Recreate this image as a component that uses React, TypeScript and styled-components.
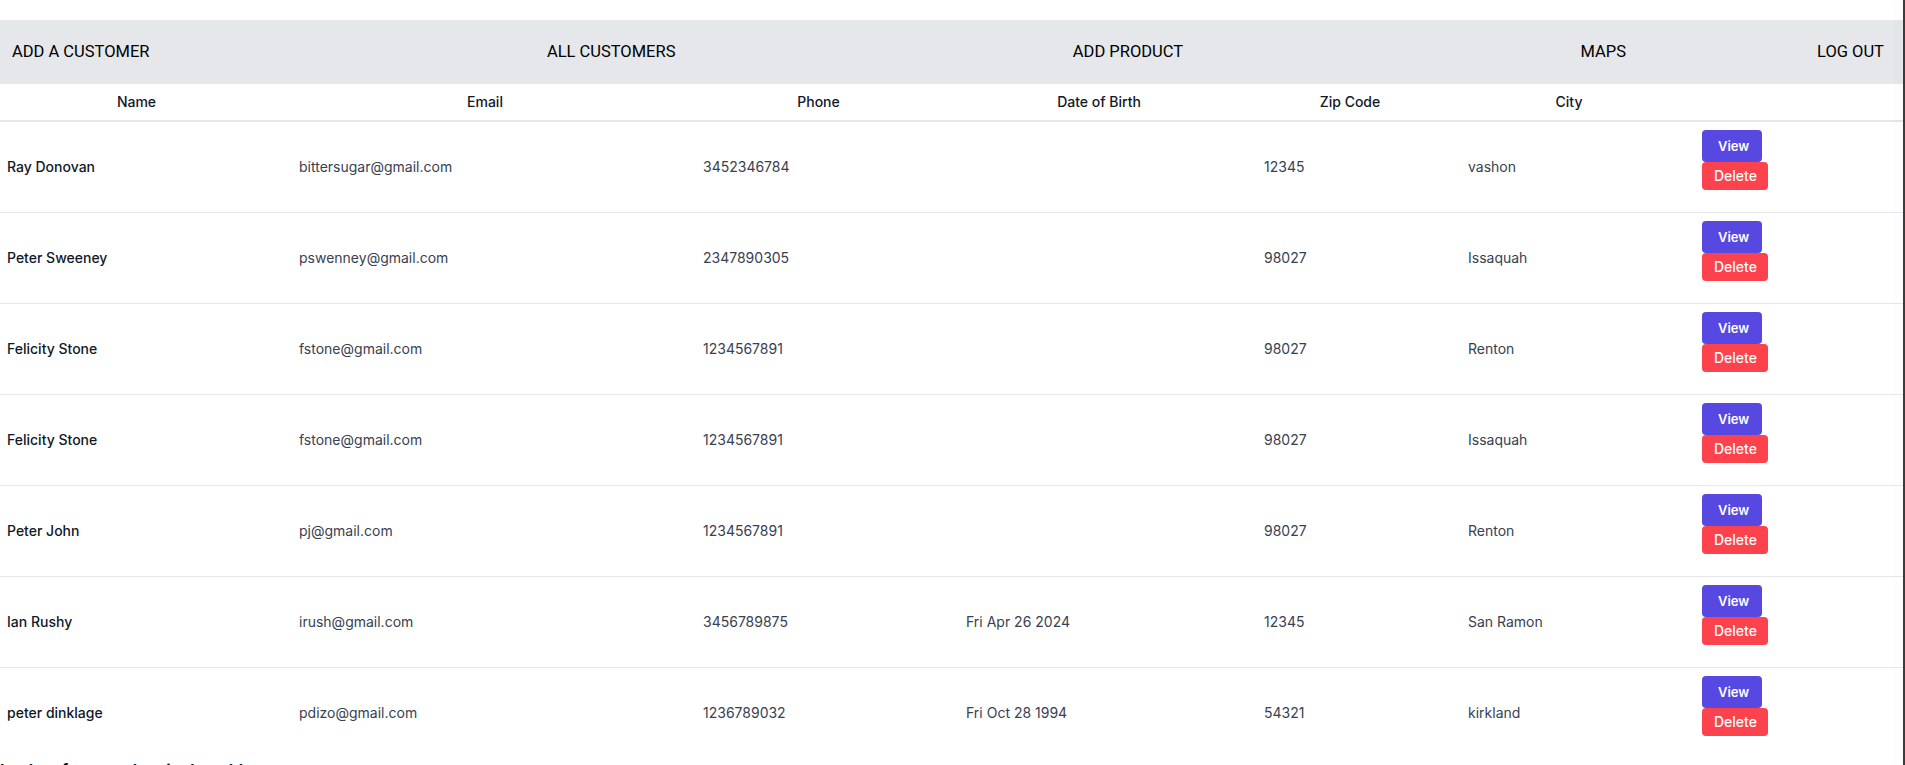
import React from 'react'
import styled, { createGlobalStyle } from 'styled-components'

interface Customer {
  name: string
  email: string
  phone: string
  dob: string
  zip: string
  city: string
}

const customers: Customer[] = [
  { name: 'Ray Donovan', email: 'bittersugar@gmail.com', phone: '3452346784', dob: '', zip: '12345', city: 'vashon' },
  { name: 'Peter Sweeney', email: 'pswenney@gmail.com', phone: '2347890305', dob: '', zip: '98027', city: 'Issaquah' },
  { name: 'Felicity Stone', email: 'fstone@gmail.com', phone: '1234567891', dob: '', zip: '98027', city: 'Renton' },
  { name: 'Felicity Stone', email: 'fstone@gmail.com', phone: '1234567891', dob: '', zip: '98027', city: 'Issaquah' },
  { name: 'Peter John', email: 'pj@gmail.com', phone: '1234567891', dob: '', zip: '98027', city: 'Renton' },
  { name: 'Ian Rushy', email: 'irush@gmail.com', phone: '3456789875', dob: 'Fri Apr 26 2024', zip: '12345', city: 'San Ramon' },
  { name: 'peter dinklage', email: 'pdizo@gmail.com', phone: '1236789032', dob: 'Fri Oct 28 1994', zip: '54321', city: 'kirkland' }
]

const columns = [
  { label: 'Name', width: 283 },
  { label: 'Email', width: 404 },
  { label: 'Phone', width: 263 },
  { label: 'Date of Birth', width: 298 },
  { label: 'Zip Code', width: 204 },
  { label: 'City', width: 234 },
  { label: '', width: 217 }
]

const App: React.FC = () => {
  return (
    <Frame>
      <GlobalStyle />
      <Page>
        <NavBar>
          <NavLink>ADD A CUSTOMER</NavLink>
          <NavLink>ALL CUSTOMERS</NavLink>
          <NavLink>ADD PRODUCT</NavLink>
          <NavGroup>
            <NavLink>MAPS</NavLink>
            <NavLink>LOG OUT</NavLink>
          </NavGroup>
        </NavBar>

        <Table>
          <colgroup>
            {columns.map((col, i) => (
              <col key={i} style={{ width: col.width }} />
            ))}
          </colgroup>
          <thead>
            <tr>
              {columns.map((col, i) => (
                <HeadCell key={i}>{col.label}</HeadCell>
              ))}
            </tr>
          </thead>
          <tbody>
            {customers.map((c, i) => (
              <Row key={i}>
                <NameCell>{c.name}</NameCell>
                <Cell>{c.email}</Cell>
                <Cell>{c.phone}</Cell>
                <Cell>{c.dob}</Cell>
                <Cell>{c.zip}</Cell>
                <Cell>{c.city}</Cell>
                <ActionCell>
                  <Actions>
                    <ViewButton>View</ViewButton>
                    <DeleteButton>Delete</DeleteButton>
                  </Actions>
                </ActionCell>
              </Row>
            ))}
          </tbody>
        </Table>

        <Caption>Lookup for a product in the table</Caption>
      </Page>
      <WindowEdge />
    </Frame>
  )
}

const GlobalStyle = createGlobalStyle`
  html, body {
    margin: 0;
    padding: 0;
    overflow: hidden;
    background: #fff;
  }
  body {
    font-family: Inter, 'Noto Sans', sans-serif;
  }
`

const Frame = styled.div`
  display: flex;
  height: 765px;
  overflow: hidden;
`

const Page = styled.div`
  flex: 1;
  min-width: 0;
  padding-top: 20px;
`

const WindowEdge = styled.div`
  width: 2px;
  flex-shrink: 0;
  background: #3b3b3b;
  box-shadow: -6px 0 8px rgba(0, 0, 0, 0.06);
`

const NavBar = styled.nav`
  height: 64px;
  background-color: #e5e7eb;
  display: flex;
  align-items: center;
  justify-content: space-between;
  padding: 0 19px 0 12px;
`

const NavGroup = styled.div`
  display: flex;
  align-items: center;
  gap: 191px;
`

const NavLink = styled.a`
  font-family: Roboto, 'Liberation Sans', sans-serif;
  font-size: 16.5px;
  color: #000;
  text-decoration: none;
  line-height: 20px;
  cursor: pointer;
`

const Table = styled.table`
  width: 100%;
  table-layout: fixed;
  border-collapse: separate;
  border-spacing: 0;
  font-size: 14px;
  line-height: 20px;
`

const HeadCell = styled.th`
  padding: 8px 0;
  text-align: center;
  font-weight: 500;
  color: #111827;
  border-bottom: 2px solid #e5e7eb;

  &:first-child {
    padding-right: 10px;
  }
`

const Row = styled.tr`
  & + & td {
    border-top: 1px solid #e5e7eb;
  }
`

const Cell = styled.td`
  padding: 0 16px;
  text-align: left;
  vertical-align: middle;
  color: #374151;
  white-space: nowrap;
`

const NameCell = styled(Cell)`
  padding-left: 7px;
  font-weight: 500;
  color: #111827;
`

const ActionCell = styled(Cell)`
  padding: 8px 16px 22px;
`

const Actions = styled.div`
  display: flex;
  flex-direction: column;
  align-items: flex-start;
`

const ViewButton = styled.button`
  border: none;
  border-radius: 4px;
  background-color: #5648e1;
  color: #fff;
  font-family: Inter, sans-serif;
  font-size: 13px;
  font-weight: 600;
  line-height: 16px;
  padding: 8px 16px;
  width: 60px;
  cursor: pointer;
`

const DeleteButton = styled.button`
  border: none;
  border-radius: 4px;
  background-color: #fc424c;
  color: #fff;
  font-family: Inter, sans-serif;
  font-size: 14px;
  font-weight: 500;
  line-height: 20px;
  padding: 4px 12px;
  width: 66px;
  cursor: pointer;
`

const Caption = styled.p`
  margin: 0;
  padding-top: 3px;
  font-size: 16px;
  font-weight: 700;
  line-height: 18px;
  color: #111827;
  white-space: nowrap;
`

export default App
